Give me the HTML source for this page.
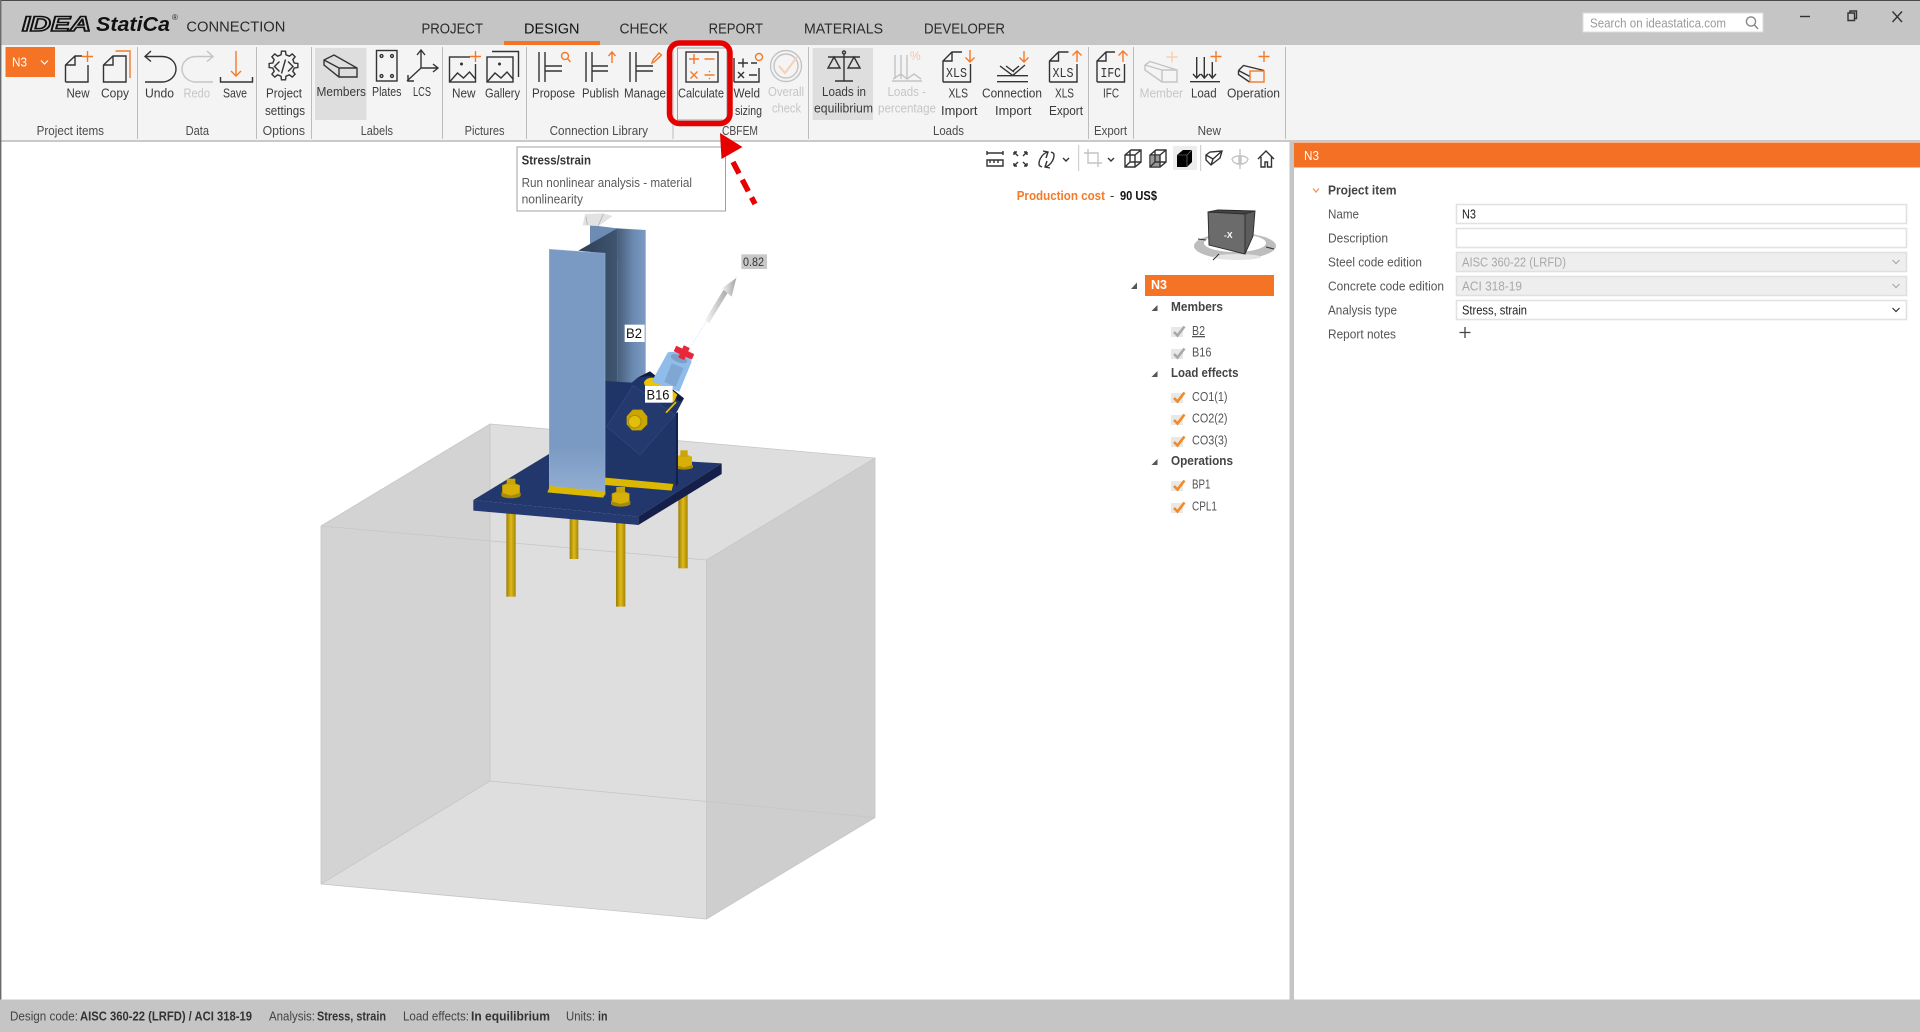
<!DOCTYPE html>
<html lang="en"><head><meta charset="utf-8"><title>IDEA StatiCa Connection</title>
<style>
html,body{margin:0;padding:0;width:1920px;height:1032px;overflow:hidden;background:#fff}
svg{display:block;font-family:"Liberation Sans",sans-serif;filter:blur(.35px)}
text{font-size:13px;fill:#3a3a3a}
.g{fill:#c6c6c6}.b{font-weight:bold}
.ic{fill:none;stroke:#333;stroke-width:1.4}
.or{fill:none;stroke:#f47a2a;stroke-width:1.4}
.gr{fill:none;stroke:#c4c4c4;stroke-width:1.4}
.lg{fill:#4a4a4a}
.in{fill:#fff;stroke:#e2e2e2;stroke-width:1.6}
.dis{fill:#eeeeee;stroke:#e0e0e0;stroke-width:1.6}
.chk{fill:none;stroke:#f5891f;stroke-width:2.6}
.chg{fill:none;stroke:#a8a8a8;stroke-width:2.6}
.m{font-family:"Liberation Mono",monospace;font-size:13.5px;fill:#333}
</style></head><body>
<svg width="1920" height="1032" viewBox="0 0 1920 1032" xmlns="http://www.w3.org/2000/svg">
<defs>
<linearGradient id="rod" x1="0" x2="1" y1="0" y2="0"><stop offset="0" stop-color="#9c7e08"/><stop offset=".5" stop-color="#e0bb18"/><stop offset="1" stop-color="#a38408"/></linearGradient>
<linearGradient id="fl" x1="0" x2="0" y1="0" y2="1"><stop offset="0" stop-color="#7a9ac3"/><stop offset=".8" stop-color="#7a9ac3"/><stop offset="1" stop-color="#93aed2"/></linearGradient>
<linearGradient id="bf" x1="0" x2="1" y1="0" y2="0"><stop offset="0" stop-color="#475c78"/><stop offset=".55" stop-color="#6a89b0"/><stop offset="1" stop-color="#7c9bc4"/></linearGradient>
<linearGradient id="web" x1="0" x2="1" y1="0" y2="0"><stop offset="0" stop-color="#2e3e55"/><stop offset="1" stop-color="#3f5570"/></linearGradient>
<linearGradient id="arr" x1="0" x2="1" y1="0" y2="0"><stop offset="0" stop-color="#f6f6f6"/><stop offset="1" stop-color="#a4a4a4"/></linearGradient>
</defs>

<!-- chrome -->
<rect width="1920" height="45" fill="#c4c5c4"/>
<rect width="1920" height="1" fill="#4a4a4a"/>
<rect x="0" y="45" width="1920" height="96" fill="#f4f4f4"/>
<rect x="0" y="140" width="1920" height="2" fill="#c9c9c9"/>
<rect x="0" y="0" width="1.4" height="1032" fill="#6a6a6a"/>

<!-- logo -->
<text x="22" y="31" textLength="69" lengthAdjust="spacingAndGlyphs" style="font-size:21px;font-weight:bold;font-style:italic;fill:#c4c5c4;stroke:#111;stroke-width:1.5">IDEA</text>
<text x="96" y="31" textLength="74" lengthAdjust="spacingAndGlyphs" style="font-size:20px;font-weight:bold;font-style:italic;fill:#111">StatiCa</text>
<text x="172" y="20" style="font-size:8px;fill:#222">®</text>
<text x="186.4" y="31.5" textLength="99" lengthAdjust="spacingAndGlyphs" style="font-size:15px;fill:#2a2a2a">CONNECTION</text>

<!-- tabs -->
<text x="421.5" y="33.6" textLength="61.5" lengthAdjust="spacingAndGlyphs" style="font-size:15px;fill:#2a2a2a">PROJECT</text>
<text x="524" y="33.6" textLength="55.5" lengthAdjust="spacingAndGlyphs" style="font-size:15px;fill:#111">DESIGN</text>
<text x="619.5" y="33.6" textLength="48.5" lengthAdjust="spacingAndGlyphs" style="font-size:15px;fill:#2a2a2a">CHECK</text>
<text x="708.6" y="33.6" textLength="54.4" lengthAdjust="spacingAndGlyphs" style="font-size:15px;fill:#2a2a2a">REPORT</text>
<text x="804" y="33.6" textLength="79" lengthAdjust="spacingAndGlyphs" style="font-size:15px;fill:#2a2a2a">MATERIALS</text>
<text x="924" y="33.6" textLength="81" lengthAdjust="spacingAndGlyphs" style="font-size:15px;fill:#2a2a2a">DEVELOPER</text>
<rect x="504" y="41" width="96" height="4" fill="#f47324"/>

<!-- search + window -->
<rect x="1583" y="13" width="180" height="19" fill="#fff" stroke="#dcdcdc"/>
<text x="1590" y="27.5" textLength="136" lengthAdjust="spacingAndGlyphs" style="fill:#9a9a9a">Search on ideastatica.com</text>
<circle cx="1751" cy="21.5" r="4.6" class="ic" style="stroke:#888"/><path d="M1754.5 25l3.5 4" class="ic" style="stroke:#888"/>
<path d="M1800 16.5h10" class="ic"/>
<path d="M1848 13h6.5v7.5h-6.5zM1850 13v-2h6.5v7.5h-2" class="ic"/>
<path d="M1892.5 11.5l9.5 10.5M1902 11.5l-9.5 10.5" class="ic"/>

<!-- separators -->
<g fill="#bcbcbc">
<rect x="137" y="47" width="1" height="92"/><rect x="256" y="47" width="1" height="92"/><rect x="311" y="47" width="1" height="92"/><rect x="442" y="47" width="1" height="92"/><rect x="526" y="47" width="1" height="92"/><rect x="672.5" y="47" width="1" height="92"/><rect x="808" y="47" width="1" height="92"/><rect x="1088" y="47" width="1" height="92"/><rect x="1133" y="47" width="1" height="92"/><rect x="1285" y="47" width="1" height="92"/>
</g>

<!-- highlight buttons -->
<rect x="315" y="48" width="51.5" height="72" fill="#dedede"/>
<rect x="812.6" y="48" width="60.4" height="72" fill="#dedede"/>
<rect x="677.5" y="48" width="49.5" height="72" fill="#f4f4f4" stroke="#a0a0a0"/>

<!-- N3 dropdown -->
<rect x="5.5" y="47" width="49.5" height="30" fill="#f47324"/>
<text x="12" y="66.5" textLength="15" lengthAdjust="spacingAndGlyphs" style="fill:#fff">N3</text>
<path d="M41 60.5l3.5 3.5 3.500-3.500" fill="none" stroke="#fff" stroke-width="1.2"/>

<!-- ribbon icons -->
<!-- new -->
<path class="ic" d="M65.500 82V65l9.500-9h7M88 65v17H65.500M65.500 65h9.500v-9"/><path class="or" d="M87.500 51v11M82 56.500h11"/>
<!-- copy -->
<path class="ic" d="M103.500 82V65l9.500-9h13v26zM103.500 65h9.500v-9"/><path class="or" d="M115.500 51h14.500v27"/>
<!-- undo -->
<path class="ic" d="M145 56.500h17c8 0 14 5.500 14 12.500s-6 13-14 13h-17M151 51l-6 5.500 6 5"/>
<!-- redo -->
<path class="gr" d="M213 56.500h-17c-8 0-14 5.500-14 12.500s6 13 14 13h17M207 51l6 5.500-6 5"/>
<!-- save -->
<path class="or" d="M236 51v25M231 71l5 5 5-5"/><path class="ic" d="M220.500 77v5h32v-5"/>
<!-- settings -->
<polygon class="ic" transform="translate(283.500,65.500)" points="10.72,-2.47 14.36,-2.02 14.36,2.02 10.72,2.47 9.33,5.83 11.58,8.73 8.73,11.58 5.83,9.33 2.47,10.72 2.02,14.36 -2.02,14.36 -2.47,10.72 -5.83,9.33 -8.73,11.58 -11.58,8.73 -9.33,5.83 -10.72,2.47 -14.36,2.02 -14.36,-2.02 -10.72,-2.47 -9.33,-5.83 -11.58,-8.73 -8.73,-11.58 -5.83,-9.33 -2.47,-10.72 -2.02,-14.36 2.02,-14.36 2.47,-10.72 5.83,-9.33 8.73,-11.58 11.58,-8.73 9.33,-5.83"/>
<path class="ic" d="M279.500 61.500l-5 5 5 5M288 61.500l5 5-5 5M285.500 59.500l-4 14"/>
<!-- members -->
<path class="ic" d="M324 60l10-5 23 13v9h-18l-15-12zM324 65v-5M339 68v9M339 68h18M324 60l15 8"/>
<!-- plates -->
<rect x="376.500" y="50.500" width="20.500" height="30.500" class="ic"/><circle cx="381.500" cy="56" r="1.400" class="ic"/><circle cx="392" cy="56" r="1.400" class="ic"/><circle cx="381.500" cy="76" r="1.400" class="ic"/><circle cx="392" cy="76" r="1.400" class="ic"/>
<!-- lcs -->
<path class="ic" d="M421 68V50M417 55l4-5 4 5M421 68h17M433 64l5 4-5 4M421 68L407 81M408 75v6h6"/>
<!-- picture new -->
<rect x="449.500" y="57" width="26" height="25" class="ic"/><circle cx="461.500" cy="64" r="1.500" fill="#333"/><path class="ic" d="M449.500 82l8-9 6 5 6-6 6 7"/><rect x="470" y="50" width="12" height="14" fill="#f4f4f4"/><path class="or" d="M475.500 51v11M470 56.500h11"/>
<!-- gallery -->
<rect x="487" y="57" width="26" height="25" class="ic"/><circle cx="499.500" cy="64" r="1.500" fill="#333"/><path class="ic" d="M487 82l8-9 6 5 6-6 6 7M492 51.500h26.500V77"/>
<!-- propose -->
<path class="ic" d="M539 52v30M545 52v30M545 66h17M545 71h17"/><circle cx="565" cy="56" r="3.500" class="or"/><path class="or" d="M567.500 58.500l3 3.500"/>
<!-- publish -->
<path class="ic" d="M586 52v30M592 52v30M592 66h16M592 71h16"/><path class="or" d="M612 63V52M608.500 56l3.500-4 3.500 4"/>
<!-- manage -->
<path class="ic" d="M630 52v30M636 52v30M636 66h17M636 71h17"/><path class="or" d="M654 62l-2 1 1-3 6-7 2.500 2z"/>
<!-- calculate -->
<rect x="686" y="52" width="32" height="30" class="ic"/>
<path class="or" d="M694 54v10M689 59h10M704.500 59h10M690.500 71.500l7 7M697.500 71.500l-7 7M704.500 75h10"/><circle cx="709.500" cy="71.500" r=".8" fill="#f47a2a"/><circle cx="709.500" cy="78.500" r=".8" fill="#f47a2a"/>
<!-- weld sizing -->
<path class="ic" d="M734 82V58M734 82h25V68M738 63h10M743 58.500v9M751 63h6M738 72l6 6M744 72l-6 6M749 75h8"/><circle cx="759" cy="57" r="3.500" class="or"/>
<!-- overall -->
<circle cx="786" cy="66" r="15.500" class="gr"/><circle cx="786" cy="66" r="12" class="gr"/><path d="M779 66l6 7 12-16" fill="none" stroke="#f7cfb4" stroke-width="2"/>
<!-- scale -->
<path class="ic" d="M844 54v27M835 81h18M828 57h32M834 57l-6 11h12zM854 57l-6 11h12z"/><circle cx="844" cy="52.500" r="1.500" class="ic"/>
<!-- loads percentage -->
<path class="gr" d="M895 55v24M901 55v24M907 55v24M892 81h30M893 79l8-5 6 5 7-5 7 5"/><text x="910" y="60" style="font-size:12px;fill:#f7c4a4">%</text>
<!-- xls import -->
<path class="ic" d="M943 82V61l9-9h10M970.500 64v18H943M943 61h9v-9"/><text x="946" y="77" textLength="21" lengthAdjust="spacingAndGlyphs" class="m">XLS</text><path class="or" d="M970 50v12M965.500 57.500l4.500 4.500 4.500-4.500"/>
<!-- connection import -->
<path class="or" d="M1024 51v11M1019.500 57.500l4.500 4.500 4.500-4.500"/><path class="ic" d="M997 75.700h31M997 81.700h31M1000 66l13 9.700M1025 65l-12.500 10.700M1006 66l8 6M1019 66l-6 5"/>
<!-- xls export -->
<path class="ic" d="M1049.500 82V61l9-9h10M1077 64v18h-27.500M1049.500 61h9v-9"/><text x="1052.500" y="77" textLength="21" lengthAdjust="spacingAndGlyphs" class="m">XLS</text><path class="or" d="M1077 62V51M1072.500 55.500l4.500-4.500 4.500 4.500"/>
<!-- ifc -->
<path class="ic" d="M1097 82V61l9-9h9M1124.500 64v18h-27.500M1097 61h9v-9"/><text x="1100.500" y="77" textLength="20.500" lengthAdjust="spacingAndGlyphs" class="m">IFC</text><path class="or" d="M1123 62V51M1118.500 55.500l4.500-4.500 4.500 4.500"/>
<!-- member -->
<path class="gr" d="M1145 65l5-3.500 27 8.500v12h-15l-17-12zM1145 65l17 5v12M1162 70h15"/><path d="M1172 51.500v11M1166.500 57h11" fill="none" stroke="#f7cfb4" stroke-width="1.400"/>
<!-- load -->
<path class="ic" d="M1196.700 57v21M1204.300 57v21M1212.300 57v21M1190 81.700h30M1193 74l3.700 4 3.700-4M1201 74l3.300 4 3.700-4M1209 74l3.300 4 3.700-4"/><rect x="1211" y="50" width="11" height="12" fill="#f4f4f4"/><path class="or" d="M1216 51v11M1210.500 56.500h11"/>
<!-- operation -->
<path class="ic" d="M1238.500 70.500l5-5 20.500 5M1238.500 70.500l11.500 6M1238.500 70.500v4l11 7.500"/><rect x="1250" y="71" width="14" height="11" class="or"/><path class="or" d="M1264 51v11M1258.500 56.500h11"/>

<!-- ribbon labels -->
<text x="66.500" y="97.700" textLength="23" lengthAdjust="spacingAndGlyphs">New</text>
<text x="101" y="97.700" textLength="28" lengthAdjust="spacingAndGlyphs">Copy</text>
<text x="145" y="97.700" textLength="29" lengthAdjust="spacingAndGlyphs">Undo</text>
<text x="183.500" y="97.700" textLength="26.500" lengthAdjust="spacingAndGlyphs" class="g">Redo</text>
<text x="223" y="97.700" textLength="24" lengthAdjust="spacingAndGlyphs">Save</text>
<text x="266" y="97.700" textLength="36" lengthAdjust="spacingAndGlyphs">Project</text>
<text x="265" y="115" textLength="40" lengthAdjust="spacingAndGlyphs">settings</text>
<text x="316.500" y="96" textLength="49.500" lengthAdjust="spacingAndGlyphs">Members</text>
<text x="372" y="96" textLength="29.500" lengthAdjust="spacingAndGlyphs">Plates</text>
<text x="413" y="96" textLength="18" lengthAdjust="spacingAndGlyphs">LCS</text>
<text x="452" y="97.700" textLength="23.500" lengthAdjust="spacingAndGlyphs">New</text>
<text x="485" y="97.700" textLength="35" lengthAdjust="spacingAndGlyphs">Gallery</text>
<text x="532" y="97.700" textLength="43" lengthAdjust="spacingAndGlyphs">Propose</text>
<text x="582" y="97.700" textLength="37" lengthAdjust="spacingAndGlyphs">Publish</text>
<text x="624" y="97.700" textLength="42" lengthAdjust="spacingAndGlyphs">Manage</text>
<text x="678" y="97.700" textLength="46" lengthAdjust="spacingAndGlyphs">Calculate</text>
<text x="733.500" y="97.700" textLength="26.500" lengthAdjust="spacingAndGlyphs">Weld</text>
<text x="735" y="115" textLength="27" lengthAdjust="spacingAndGlyphs">sizing</text>
<text x="768" y="96" textLength="36" lengthAdjust="spacingAndGlyphs" class="g">Overall</text>
<text x="772" y="112.700" textLength="29" lengthAdjust="spacingAndGlyphs" class="g">check</text>
<text x="822" y="96" textLength="44" lengthAdjust="spacingAndGlyphs">Loads in</text>
<text x="814" y="112.700" textLength="59" lengthAdjust="spacingAndGlyphs">equilibrium</text>
<text x="887.500" y="96" textLength="38.500" lengthAdjust="spacingAndGlyphs" class="g">Loads -</text>
<text x="878" y="112.700" textLength="58" lengthAdjust="spacingAndGlyphs" class="g">percentage</text>
<text x="948.500" y="97.700" textLength="19.500" lengthAdjust="spacingAndGlyphs">XLS</text>
<text x="941" y="115" textLength="36.500" lengthAdjust="spacingAndGlyphs">Import</text>
<text x="982" y="97.700" textLength="60" lengthAdjust="spacingAndGlyphs">Connection</text>
<text x="995" y="115" textLength="36.400" lengthAdjust="spacingAndGlyphs">Import</text>
<text x="1055" y="97.700" textLength="19" lengthAdjust="spacingAndGlyphs">XLS</text>
<text x="1049" y="115" textLength="34" lengthAdjust="spacingAndGlyphs">Export</text>
<text x="1103" y="97.700" textLength="16" lengthAdjust="spacingAndGlyphs">IFC</text>
<text x="1139.600" y="97.700" textLength="43.400" lengthAdjust="spacingAndGlyphs" class="g">Member</text>
<text x="1191" y="97.700" textLength="25.600" lengthAdjust="spacingAndGlyphs">Load</text>
<text x="1227" y="97.700" textLength="53" lengthAdjust="spacingAndGlyphs">Operation</text>

<!-- groups -->
<text x="36.600" y="135" textLength="67.400" lengthAdjust="spacingAndGlyphs" class="lg">Project items</text>
<text x="185.600" y="135" textLength="23.400" lengthAdjust="spacingAndGlyphs" class="lg">Data</text>
<text x="262.600" y="135" textLength="42.400" lengthAdjust="spacingAndGlyphs" class="lg">Options</text>
<text x="360.700" y="135" textLength="32.300" lengthAdjust="spacingAndGlyphs" class="lg">Labels</text>
<text x="464.600" y="135" textLength="40" lengthAdjust="spacingAndGlyphs" class="lg">Pictures</text>
<text x="549.600" y="135" textLength="98.400" lengthAdjust="spacingAndGlyphs" class="lg">Connection Library</text>
<text x="722" y="135" textLength="36" lengthAdjust="spacingAndGlyphs" class="lg">CBFEM</text>
<text x="933" y="135" textLength="31" lengthAdjust="spacingAndGlyphs" class="lg">Loads</text>
<text x="1094" y="135" textLength="33" lengthAdjust="spacingAndGlyphs" class="lg">Export</text>
<text x="1197.600" y="135" textLength="23.400" lengthAdjust="spacingAndGlyphs" class="lg">New</text>

<!-- concrete block -->
<polygon points="321,526 490,424 490,781 321,884" fill="#d3d3d3"/>
<polygon points="490,424 875,458 706.500,560 706.500,919 490,897" fill="#dedede"/>
<polygon points="706.500,560 875,458 875,817.500 706.500,919" fill="#cecece"/>
<polygon points="321,884 490,781 706.500,804 706.500,919" fill="#dedede"/>
<path d="M321 526L490 424L875 458L706.500 560L321 526V884L706.500 919V560M490 424V781L875 817.500V458M321 884L490 781M706.500 919L875 817.500" fill="none" stroke="#c6c6c6" stroke-width=".8"/>

<!-- steel model -->
<g transform="translate(460,200) scale(.33333)">
<!-- rods -->
<rect x="139" y="930" width="28" height="260" fill="url(#rod)"/>
<rect x="329" y="950" width="26" height="127" fill="url(#rod)"/>
<rect x="468" y="960" width="28" height="260" fill="url(#rod)"/>
<rect x="655" y="880" width="28" height="225" fill="url(#rod)"/>
<!-- base plate -->
<polygon points="40,900 270,760 785,790 535,950" fill="#22376b"/>
<polygon points="40,900 535,950 535,975 40,932" fill="#243a70"/>
<polygon points="535,950 785,790 785,822 535,975" fill="#14204a"/>
<!-- back nut -->
<g transform="translate(672,785)"><path d="M-27 10v8c10 8 44 8 54 0v-8z" fill="#a88a05"/><polygon points="-24,-15 0,-24 24,-15 24,10 0,18 -24,10" fill="#d6b006"/><rect x="-11" y="-34" width="22" height="20" fill="#c9a508"/></g>
<!-- column back -->
<polygon points="390,75 472,85 472,180 390,180" fill="#6c8cb4"/>
<polygon points="472,85 557,90 557,560 472,560" fill="url(#bf)"/>
<polygon points="355,152 472,85 472,560 435,560 435,160" fill="url(#web)"/>
<!-- gusset -->
<polygon points="435,543 515,548 533,533 570,514 672,595 648,640 648,850 435,835" fill="#1f3568"/>
<polygon points="533,533 570,514 672,595 660,606 570,528" fill="#101c44"/>
<polygon points="440,680 520,556 645,645 540,765" fill="#24396e" stroke="#3a5590" stroke-width="1.500"/>
<polygon points="648,640 654,636 654,850 648,860" fill="#14204a"/>
<!-- front flange -->
<polygon points="268,148 435,160 435,885 268,865" fill="url(#fl)" stroke="#8eaed6" stroke-width="2"/>
<!-- welds -->
<polygon points="270,858 437,875 430,893 262,877" fill="#dcb800"/>
<polygon points="435,833 640,852 635,872 435,855" fill="#dcb800"/>
<!-- B16 -->
<path d="M552 548c5-18 35-20 48-6l52 42-10 22-40-10c-20-6-47-29-50-48z" fill="#eec300"/>
<path d="M618 638l30-32" stroke="#e6c000" stroke-width="5" fill="none"/>
<path d="M623 458C640 450 690 465 695 485L658 575L575 545z" fill="#90bcea"/>
<ellipse cx="657" cy="476" rx="26" ry="11" fill="#7d9fc6" transform="rotate(20 657 476)"/>
<path d="M635 490l36 14-24 56-34-14z" fill="#6f92bb" opacity=".5"/>
<!-- red mark -->
<g transform="translate(672,458) rotate(25)" fill="#e8283a"><rect x="-30" y="-9" width="60" height="18" rx="2"/><rect x="-10" y="-20" width="20" height="40" rx="2"/></g>
<!-- arrow -->
<path d="M695 435L738 365M810 258L832 228" stroke="#cfe0f4" stroke-width="2" stroke-dasharray="4 3" fill="none"/>
<polygon points="735,360 795,262 808,270 747,370" fill="url(#arr)"/>
<polygon points="829,234 785,265 815,290" fill="url(#arr)"/>
<!-- top thing -->
<polygon points="375,42 430,40 458,48 430,68 415,78 368,76" fill="#e2e2e2"/>
<path d="M378 50l4 24M430 42l-15 34" stroke="#a8a8a8" stroke-width="2" fill="none"/>
<!-- bolts -->
<g transform="translate(530,659)"><polygon points="-30,-10 -12,-30 16,-30 32,-10 32,14 14,32 -14,32 -30,14" fill="#caa600"/><circle r="19" cx="-6" cy="6" fill="#e2bf0a" stroke="#a88a05" stroke-width="3"/></g>
<g transform="translate(153,870)"><path d="M-29 8v10c10 9 48 9 58 0V8z" fill="#a88a05"/><polygon points="-26,-14 0,-24 26,-14 26,10 0,18 -26,10" fill="#d6b006" stroke="#a88a05" stroke-width="2"/><rect x="-13" y="-34" width="26" height="18" fill="#c9a508"/></g>
<g transform="translate(482,895)"><path d="M-29 8v10c10 9 48 9 58 0V8z" fill="#a88a05"/><polygon points="-26,-14 0,-24 26,-14 26,10 0,18 -26,10" fill="#d6b006" stroke="#a88a05" stroke-width="2"/><rect x="-13" y="-34" width="26" height="18" fill="#c9a508"/></g>
<!-- labels -->
<rect x="494" y="374" width="60" height="52" fill="#fff"/>
<rect x="555" y="558" width="83" height="50" fill="#fff"/>
<rect x="844" y="163" width="77" height="44" fill="#c8c8c8"/>
</g>
<text x="626" y="338" textLength="16" lengthAdjust="spacingAndGlyphs" style="font-size:14px;fill:#111">B2</text>
<text x="646.500" y="399.500" textLength="23" lengthAdjust="spacingAndGlyphs" style="font-size:14px;fill:#111">B16</text>
<text x="743" y="266" textLength="21" lengthAdjust="spacingAndGlyphs" style="font-size:12px;fill:#333">0.82</text>

<!-- tooltip -->
<rect x="517" y="147" width="208.500" height="64" fill="#fff" stroke="#a0a0a0"/>
<text x="521.600" y="164.500" textLength="69.400" lengthAdjust="spacingAndGlyphs" class="b" style="fill:#333">Stress/strain</text>
<text x="521.600" y="187" textLength="170.400" lengthAdjust="spacingAndGlyphs" style="fill:#5a5a5a">Run nonlinear analysis - material</text>
<text x="521.600" y="203.500" textLength="61.400" lengthAdjust="spacingAndGlyphs" style="fill:#5a5a5a">nonlinearity</text>

<!-- red callout -->
<rect x="669.500" y="43" width="60.500" height="80.500" rx="10" fill="none" stroke="#e60000" stroke-width="5.500"/>
<polygon points="720,133 721.500,159 742.500,147" fill="#e60000"/>
<path d="M733 162L755 204" stroke="#e60000" stroke-width="5.500" stroke-dasharray="13 7" fill="none"/>

<!-- view toolbar -->
<rect x="1173" y="146" width="24" height="24" fill="#ededed"/>
<rect x="1078" y="145" width="1.200" height="26" fill="#d0d0d0"/>
<rect x="1200" y="145" width="1.200" height="26" fill="#d0d0d0"/>
<path class="ic" d="M987 153h16M987 151v4M1003 151v4M987 160h16v6h-16zM990 160v3M994 160v3M998 160v3"/>
<path class="ic" d="M1014 152l4 4M1014 152h3M1014 152v3M1027 152l-4 4M1027 152h-3M1027 152v3M1014 166l4-4M1014 166h3M1014 166v-3M1027 166l-4-4M1027 166h-3M1027 166v-3"/>
<path class="ic" d="M1048 152c-5 1-9 7-9 12 0 2 1 2 3 3M1046 158l2-6-5-1M1045 167c5-1 9-7 9-12 0-2-1-2-3-3M1047 161l-2 6 5 1"/>
<path class="ic" d="M1063 158l3 3 3-3M1108 158l3 3 3-3"/>
<path class="gr" d="M1084 153h14v14M1088 149v14h14"/>
<path class="ic" d="M1125 155l6-5h10v12l-6 5h-10zM1125 155h10v12M1135 155l6-5M1130 150v12h11M1130 162l-5 5"/>
<rect x="1151" y="156" width="8.500" height="10" fill="#999"/>
<path class="ic" d="M1150 155l6-5h10v12l-6 5h-10zM1150 155h10v12M1160 155l6-5M1155 150v12h11M1155 162l-5 5"/>
<polygon points="1177,155 1183,150 1192,150 1192,162 1187,167 1177,167" fill="#000"/><path d="M1177 155h10l5-5M1187 155v12" stroke="#888" stroke-width=".6" fill="none"/>
<path class="ic" d="M1206 155l4-3 12-1-2 7-9 7-5-5zM1206 155l7 4 9-8M1213 159l-2 6"/>
<path class="gr" d="M1240 149v20M1232 159c2-3 6-3 7-3v8c-2 0-6-1-7-5zM1248 159c-2-3-6-3-7-3v8c2 0 6-1 7-5z"/>
<path class="ic" d="M1258 159l8-8 8 8M1261 157v10h4v-5h2.500v5h4v-10"/>

<!-- cost -->
<text x="1016.700" y="200" textLength="88.300" lengthAdjust="spacingAndGlyphs" class="b" style="font-size:12.500px;fill:#f47a2a">Production cost</text>
<text x="1110" y="200" style="fill:#333">-</text>
<text x="1120" y="200" textLength="37" lengthAdjust="spacingAndGlyphs" class="b" style="font-size:12.500px;fill:#111">90 US$</text>

<!-- nav cube -->
<ellipse cx="1235" cy="246" rx="41" ry="13" fill="#bdbdbd"/>
<ellipse cx="1235" cy="243" rx="31" ry="9" fill="#fff"/>
<ellipse cx="1237" cy="257" rx="24" ry="3" fill="#e4e4e4"/>
<polygon points="1208,212 1245,214 1245,254 1209,245" fill="#6b6b6b"/>
<polygon points="1245,214 1255,211 1253,236 1245,254" fill="#5c5c5c"/>
<polygon points="1208,212 1218,210 1255,211 1245,214" fill="#444"/>
<path d="M1208 212L1245 214V254L1209 245ZM1245 214L1255 211L1253 236L1245 254M1208 212L1218 210L1255 211" stroke="#2a2a2a" stroke-width=".9" fill="none"/>
<text x="1224" y="238" style="font-size:8.500px;fill:#fff;font-weight:bold">-X</text>
<path d="M1198 239l8 1M1219 254l-6 6M1266 247l8 2" stroke="#333" stroke-width="1.100" fill="none"/>

<!-- tree -->
<polygon points="1137,282.500 1137,289 1131,289" fill="#555"/>
<rect x="1145" y="275" width="129" height="21" fill="#f47324"/>
<text x="1151" y="289" textLength="16" lengthAdjust="spacingAndGlyphs" class="b" style="fill:#fff">N3</text>
<polygon points="1157.500,305 1157.500,311 1151.500,311" fill="#555"/>
<text x="1171" y="311" textLength="52" lengthAdjust="spacingAndGlyphs" class="b" style="font-size:12.500px;fill:#444">Members</text>
<rect x="1171" y="327" width="12" height="10" fill="#e8e8e8"/><path class="chg" d="M1174 332l3.500 3.500 7-9"/>
<text x="1192" y="335" textLength="13" lengthAdjust="spacingAndGlyphs" style="fill:#555;text-decoration:underline">B2</text>
<rect x="1171" y="349" width="12" height="10" fill="#e8e8e8"/><path class="chg" d="M1174 354l3.500 3.500 7-9"/>
<text x="1192" y="356.500" textLength="19.500" lengthAdjust="spacingAndGlyphs" style="fill:#555">B16</text>
<polygon points="1157.500,371 1157.500,377 1151.500,377" fill="#555"/>
<text x="1171" y="377" textLength="67.500" lengthAdjust="spacingAndGlyphs" class="b" style="font-size:12.500px;fill:#444">Load effects</text>
<rect x="1171" y="393" width="12" height="10" fill="#e8e8e8"/><path class="chk" d="M1174 398l3.500 3.500 7-9"/>
<text x="1192" y="401" textLength="35.500" lengthAdjust="spacingAndGlyphs" style="fill:#555">CO1(1)</text>
<rect x="1171" y="415" width="12" height="10" fill="#e8e8e8"/><path class="chk" d="M1174 420l3.500 3.500 7-9"/>
<text x="1192" y="422.700" textLength="35.500" lengthAdjust="spacingAndGlyphs" style="fill:#555">CO2(2)</text>
<rect x="1171" y="437" width="12" height="10" fill="#e8e8e8"/><path class="chk" d="M1174 442l3.500 3.500 7-9"/>
<text x="1192" y="444.700" textLength="35.500" lengthAdjust="spacingAndGlyphs" style="fill:#555">CO3(3)</text>
<polygon points="1157.500,459 1157.500,465 1151.500,465" fill="#555"/>
<text x="1171" y="465" textLength="62" lengthAdjust="spacingAndGlyphs" class="b" style="font-size:12.500px;fill:#444">Operations</text>
<rect x="1171" y="481" width="12" height="10" fill="#e8e8e8"/><path class="chk" d="M1174 486l3.500 3.500 7-9"/>
<text x="1192" y="488.300" textLength="18.500" lengthAdjust="spacingAndGlyphs" style="fill:#555">BP1</text>
<rect x="1171" y="503" width="12" height="10" fill="#e8e8e8"/><path class="chk" d="M1174 508l3.500 3.500 7-9"/>
<text x="1192" y="510.500" textLength="25" lengthAdjust="spacingAndGlyphs" style="fill:#555">CPL1</text>

<!-- splitter and right panel -->
<rect x="1289.500" y="142" width="4.500" height="858" fill="#c4c5c4"/>
<rect x="1294" y="142.500" width="626" height="25" fill="#f47024"/>
<text x="1304" y="160" textLength="15" lengthAdjust="spacingAndGlyphs" style="fill:#fff">N3</text>
<path d="M1313 188.500l3 3.500 3-3.500" fill="none" stroke="#f4944f" stroke-width="1.300"/>
<text x="1328" y="194.700" textLength="68.500" lengthAdjust="spacingAndGlyphs" class="b" style="fill:#444">Project item</text>
<text x="1328" y="218.300" textLength="31" lengthAdjust="spacingAndGlyphs" style="fill:#555">Name</text>
<text x="1328" y="242.300" textLength="60" lengthAdjust="spacingAndGlyphs" style="fill:#555">Description</text>
<text x="1328" y="266.500" textLength="94" lengthAdjust="spacingAndGlyphs" style="fill:#555">Steel code edition</text>
<text x="1328" y="290.500" textLength="116" lengthAdjust="spacingAndGlyphs" style="fill:#555">Concrete code edition</text>
<text x="1328" y="314.500" textLength="69" lengthAdjust="spacingAndGlyphs" style="fill:#555">Analysis type</text>
<text x="1328" y="338.500" textLength="68" lengthAdjust="spacingAndGlyphs" style="fill:#555">Report notes</text>
<rect x="1456.500" y="204.500" width="450" height="19" class="in"/>
<rect x="1456.500" y="228.500" width="450" height="19" class="in"/>
<rect x="1456.500" y="252.500" width="450" height="19" class="dis"/>
<rect x="1456.500" y="276.500" width="450" height="19" class="dis"/>
<rect x="1456.500" y="300.500" width="450" height="19" class="in"/>
<text x="1462" y="218.500" textLength="14" lengthAdjust="spacingAndGlyphs" style="fill:#222">N3</text>
<text x="1462" y="266.500" textLength="104" lengthAdjust="spacingAndGlyphs" style="fill:#a8a8a8">AISC 360-22 (LRFD)</text>
<text x="1462" y="290.500" textLength="60" lengthAdjust="spacingAndGlyphs" style="fill:#a8a8a8">ACI 318-19</text>
<text x="1462" y="314.500" textLength="65" lengthAdjust="spacingAndGlyphs" style="fill:#222">Stress, strain</text>
<path d="M1892.500 260l3.500 3.500 3.500-3.500M1892.500 284l3.500 3.500 3.500-3.500" fill="none" stroke="#aaa" stroke-width="1.200"/>
<path d="M1892.500 308l3.500 3.500 3.500-3.500" fill="none" stroke="#333" stroke-width="1.200"/>
<path d="M1465 327v11M1459.500 332.500h11" fill="none" stroke="#444" stroke-width="1.300"/>

<!-- status bar -->
<rect x="0" y="999.500" width="1920" height="32.500" fill="#c4c5c4"/>
<text x="10" y="1020.700" textLength="68" lengthAdjust="spacingAndGlyphs" style="font-size:12.500px;fill:#444">Design code:</text>
<text x="80" y="1020.700" textLength="172" lengthAdjust="spacingAndGlyphs" class="b" style="font-size:12.500px;fill:#333">AISC 360-22 (LRFD) / ACI 318-19</text>
<text x="269" y="1020.700" textLength="46" lengthAdjust="spacingAndGlyphs" style="font-size:12.500px;fill:#444">Analysis:</text>
<text x="317" y="1020.700" textLength="69" lengthAdjust="spacingAndGlyphs" class="b" style="font-size:12.500px;fill:#333">Stress, strain</text>
<text x="403" y="1020.700" textLength="66" lengthAdjust="spacingAndGlyphs" style="font-size:12.500px;fill:#444">Load effects:</text>
<text x="471" y="1020.700" textLength="79" lengthAdjust="spacingAndGlyphs" class="b" style="font-size:12.500px;fill:#333">In equilibrium</text>
<text x="566" y="1020.700" textLength="29" lengthAdjust="spacingAndGlyphs" style="font-size:12.500px;fill:#444">Units:</text>
<text x="598" y="1020.700" textLength="9.500" lengthAdjust="spacingAndGlyphs" class="b" style="font-size:12.500px;fill:#333">in</text>
</svg>
</body></html>
